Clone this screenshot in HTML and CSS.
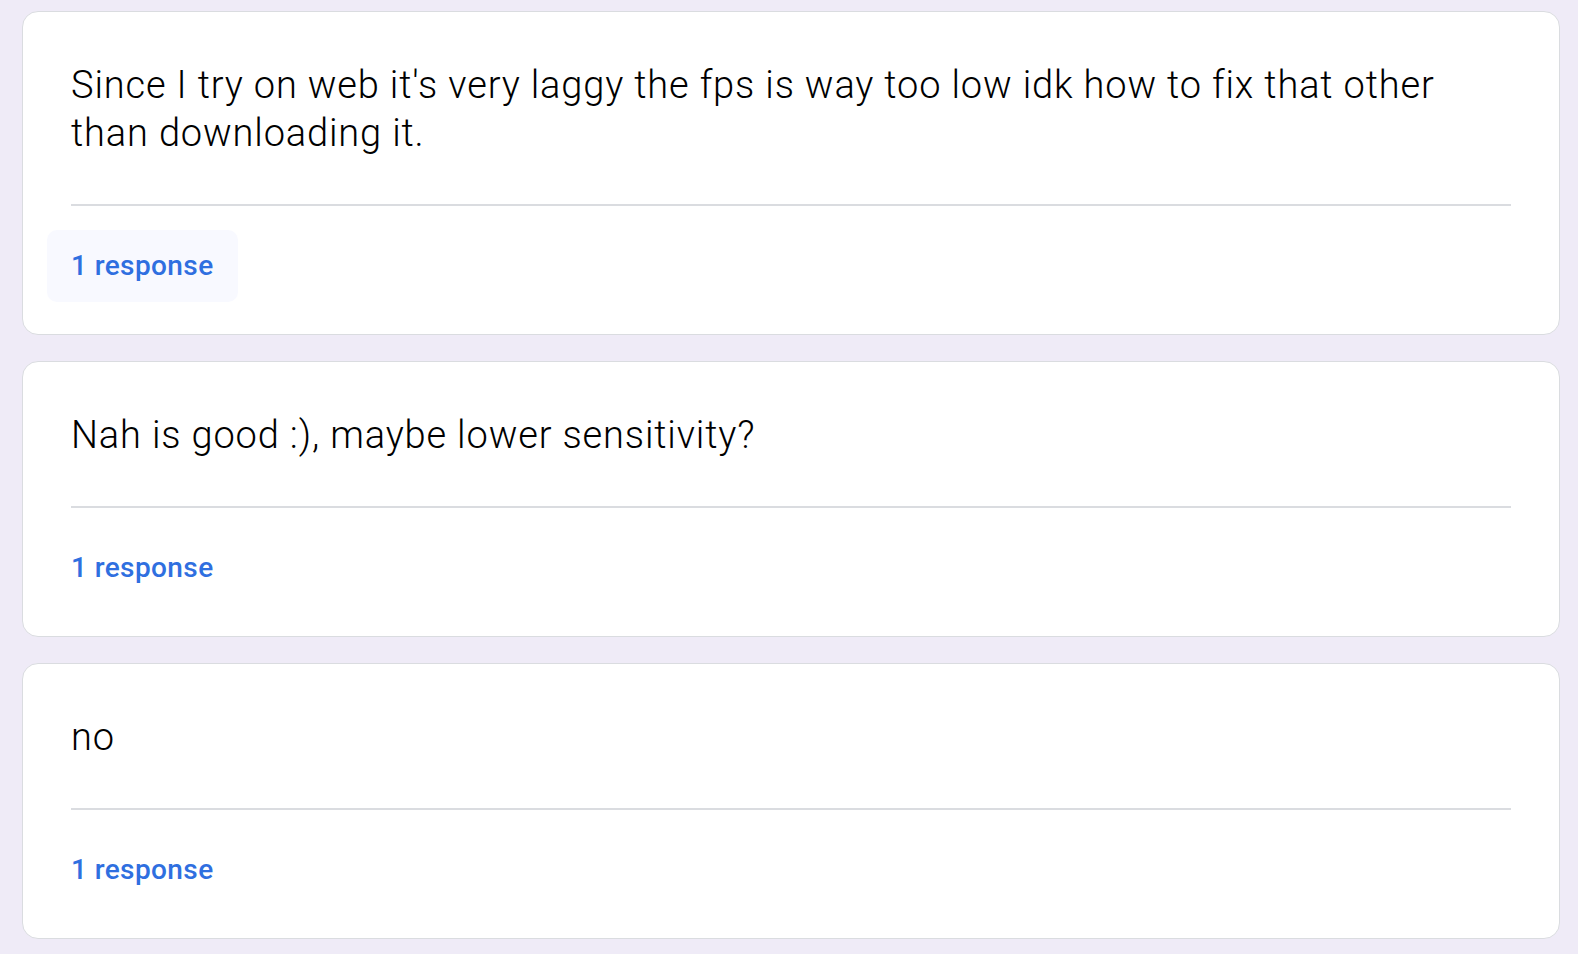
FILE: index.html
```html
<!DOCTYPE html>
<html lang="en">
<head>
<meta charset="utf-8">
<title>Responses</title>
<link rel="stylesheet" href="styles.css">
</head>
<body>
<main class="list">
  <section class="card">
    <p class="answer">Since I try on web it's very laggy the fps is way too low idk how to fix that other than downloading it.</p>
    <hr class="divider">
    <div class="count count-hover">1 response</div>
  </section>
  <section class="card">
    <p class="answer">Nah is good :), maybe lower sensitivity?</p>
    <hr class="divider">
    <div class="count">1 response</div>
  </section>
  <section class="card">
    <p class="answer">no</p>
    <hr class="divider">
    <div class="count">1 response</div>
  </section>
</main>
</body>
</html>
```

FILE: styles.css
```css
html, body {
  margin: 0;
  padding: 0;
  background: #efebf7;
}

body {
  font-family: Roboto, "Liberation Sans", sans-serif;
}

.list {
  display: flex;
  flex-direction: column;
  gap: 26px;
  padding: 11px 18px 0 22px;
}

.card {
  background: #ffffff;
  border: 1px solid #dadce0;
  border-radius: 16px;
  padding: 49px 48px 32px 48px;
  display: flex;
  flex-direction: column;
  align-items: flex-start;
}

.answer {
  margin: 0 0 47px 0;
  font-size: 38px;
  line-height: 48px;
  font-weight: 300;
  letter-spacing: 0.85px;
  color: #000000;
  align-self: stretch;
  padding-right: 40px;
}

.divider {
  align-self: stretch;
  margin: 0 0 24px 0;
  border: 0;
  height: 2px;
  background: #dadce0;
}

.count {
  margin-left: -24px;
  padding: 0 24px;
  height: 72px;
  line-height: 72px;
  border-radius: 10px;
  font-family: Roboto, "Open Sans", sans-serif;
  font-weight: 500;
  font-size: 28px;
  letter-spacing: 0.4px;
  color: #2f6fe0;
}

.count-hover {
  background: #f8f9ff;
}
```
